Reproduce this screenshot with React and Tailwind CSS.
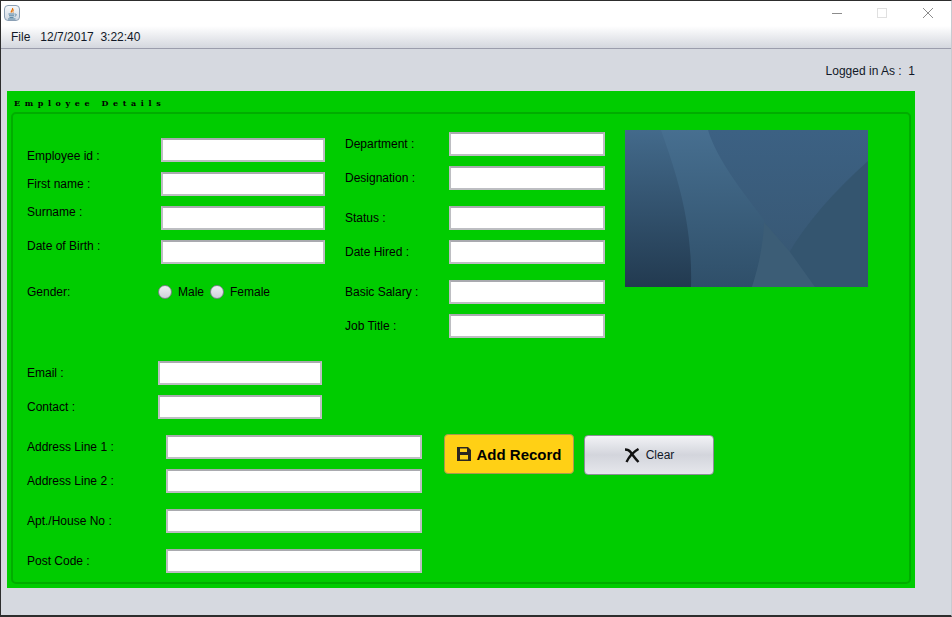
import React from 'react';

function Field({ label, labelW, inputW, shift = 'mt-0', gap = 'mb-[10px]' }) {
  return (
    <div className={`flex h-6 ${gap}`}>
      <div className={`flex items-center shrink-0 h-6 ${shift}`} style={{ width: labelW }}>{label}</div>
      <input type="text" readOnly className="h-6 bg-white border-2 border-[#bdbec2] border-t-[#a9aaaf] outline-none" style={{ width: inputW }} />
    </div>
  );
}

function Radio({ label }) {
  return (
    <div className="flex items-center">
      <div className="w-[14px] h-[14px] rounded-full border border-[#7f828c] bg-gradient-to-b from-[#eeeff3] to-[#cfd1d9]" />
      <span className="ml-[6px] mr-[6px]">{label}</span>
    </div>
  );
}

function JavaIcon() {
  return (
    <div className="w-4 h-4 rounded-sm border border-[#8ba0b5] bg-gradient-to-b from-[#f7f9fb] to-[#cfd8e2] flex items-center justify-center">
      <svg width="12" height="13" viewBox="0 0 12 13" fill="none">
        <path d="M6.5 1C7.5 3 4.5 3.6 5.3 5.6" stroke="#e76f00" strokeWidth="1.2" />
        <path d="M8 2.6C6.6 3.4 6.6 4.4 7.2 5.6" stroke="#e76f00" strokeWidth="1" />
        <path d="M2.5 7H8.5M3 8.8H8M3.5 10.6H7.5M2 12H9.5" stroke="#5382a1" strokeWidth="1" />
        <path d="M9 7C10.8 6.8 10.8 9 8.6 9.2" stroke="#5382a1" strokeWidth="0.9" />
      </svg>
    </div>
  );
}

function Wallpaper() {
  return (
    <svg width="243" height="157" viewBox="0 0 243 157" className="shrink-0 block">
      <defs>
        <linearGradient id="wpBase" x1="0" y1="0" x2="0" y2="1">
          <stop offset="0" stopColor="#3c6183" />
          <stop offset="1" stopColor="#375671" />
        </linearGradient>
        <linearGradient id="wpLeft" x1="0" y1="0" x2="0" y2="1">
          <stop offset="0" stopColor="#436a8b" />
          <stop offset="1" stopColor="#223a50" />
        </linearGradient>
        <linearGradient id="wpMid" x1="0" y1="0" x2="0" y2="1">
          <stop offset="0" stopColor="#476f90" />
          <stop offset="1" stopColor="#2f4f69" />
        </linearGradient>
      </defs>
      <rect width="243" height="157" fill="url(#wpBase)" />
      <path d="M0 0H83C92 30 118 62 139 90C139 120 134 140 127 157H0Z" fill="url(#wpMid)" />
      <path d="M0 0H36C50 40 68 90 66 157H0Z" fill="url(#wpLeft)" />
      <path d="M243 31C200 70 165 110 148 157H243Z" fill="#34556f" />
      <path d="M139 92L165 122L190 157H127C134 135 138 115 139 92Z" fill="#3c5d76" />
    </svg>
  );
}

function SaveIcon() {
  return (
    <svg width="16" height="16" viewBox="0 0 16 16">
      <path fillRule="evenodd" fill="#2b2620" d="M1 1H12L15 4V15H1ZM4 2.5V6H11V2.5ZM4 9V13.5H12V9Z" />
      <rect x="8" y="3" width="2" height="2.4" fill="#ffd015" />
    </svg>
  );
}

function ClearIcon() {
  return (
    <svg width="16" height="15" viewBox="0 0 16 15" fill="none">
      <path d="M1 1.5C3 1.5 5 1.8 6.5 4C9 7.5 12 11.5 14.5 14" stroke="#111" strokeWidth="2.4" />
      <path d="M14.5 1C10 3.5 5 9 2.5 14" stroke="#111" strokeWidth="2.4" />
    </svg>
  );
}

export default function App() {
  return (
    <div className="w-[952px] h-[617px] flex flex-col overflow-hidden border border-b-2 border-[#2d2d2d] border-r-[#c8cad0] bg-[#d6d9e0] text-[12px] leading-none text-black font-['Liberation_Sans',sans-serif]">
      {/* title bar */}
      <div className="h-[25px] bg-white flex items-center pl-[3px] pb-[1px] shrink-0">
        <JavaIcon />
        <div className="ml-auto flex items-center pr-[18px]">
          <div className="w-[10px] h-px bg-[#8c8c8c] mr-[35px]" />
          <div className="w-[10px] h-[10px] border border-[#e0e0e0] mr-[36px]" />
          <svg width="10" height="10" viewBox="0 0 10 10" stroke="#8c8c8c" strokeWidth="1"><path d="M0 0L10 10M10 0L0 10" /></svg>
        </div>
      </div>

      {/* menu bar */}
      <div className="h-[23px] shrink-0 flex items-center pl-[10px] gap-[10px] text-[#111827] bg-gradient-to-b from-white to-[#d4d7de] border-b border-[#9b9dac]">
        <span>File</span>
        <span>12/7/2017&nbsp;&nbsp;3:22:40</span>
      </div>

      {/* content */}
      <div className="flex-1 pl-[6px] pr-[36px]">
        <div className="h-[42px] flex items-center justify-end text-[#111827] pt-[2px]">
          <span className="whitespace-pre">Logged in As :  1</span>
        </div>

        <div className="w-[908px] h-[497px] bg-[#00cc00] p-1 pt-0 flex flex-col">
          <div className="h-[21px] shrink-0 flex items-center pl-[3px] pt-[3px] font-['DejaVu_Serif',serif] font-bold text-[8px] tracking-[4.6px] whitespace-pre">
            Employee Details
          </div>

          <div className="flex-1 border-2 border-[#00ad00] rounded-[5px] pl-[14px] pt-[16px]">
            {/* upper block */}
            <div className="flex">
              <div className="w-[298px] mt-2 shrink-0">
                <Field label="Employee id :" labelW={134} inputW={164} shift="mt-[6px]" />
                <Field label="First name :" labelW={134} inputW={164} />
                <Field label="Surname :" labelW={134} inputW={164} shift="-mt-[6px]" />
                <Field label="Date of Birth :" labelW={134} inputW={164} shift="-mt-[6px]" gap="mb-[21px]" />
                <div className="flex items-center h-[14px]">
                  <div className="w-[131px] shrink-0">Gender:</div>
                  <Radio label="Male" />
                  <Radio label="Female" />
                </div>
              </div>

              <div className="w-[260px] ml-5 mt-[2px] shrink-0">
                <Field label="Department :" labelW={104} inputW={156} />
                <Field label="Designation :" labelW={104} inputW={156} gap="mb-4" />
                <Field label="Status :" labelW={104} inputW={156} />
                <Field label="Date Hired :" labelW={104} inputW={156} gap="mb-4" />
                <Field label="Basic Salary :" labelW={104} inputW={156} />
                <Field label="Job Title :" labelW={104} inputW={156} gap="mb-0" />
              </div>

              <div className="ml-5">
                <Wallpaper />
              </div>
            </div>

            {/* email and contact */}
            <div className="mt-[23px]">
              <Field label="Email :" labelW={131} inputW={164} />
              <Field label="Contact :" labelW={131} inputW={164} gap="mb-0" />
            </div>

            {/* address and buttons */}
            <div className="flex items-start mt-[15px]">
              <div className="pt-px">
                <Field label="Address Line 1 :" labelW={139} inputW={256} />
                <Field label="Address Line 2 :" labelW={139} inputW={256} gap="mb-4" />
                <Field label="Apt./House No :" labelW={139} inputW={256} gap="mb-4" />
                <Field label="Post Code :" labelW={139} inputW={256} gap="mb-0" />
              </div>
              <button className="ml-[22px] w-[130px] h-10 rounded-[4px] border border-[#a89a4e] bg-[#ffd015] flex items-center justify-center gap-[4px] font-bold text-[15px] text-black">
                <SaveIcon />
                Add Record
              </button>
              <button className="ml-[10px] mt-px w-[130px] h-10 rounded-[4px] border border-[#8d8f98] bg-gradient-to-b from-[#f2f3f6] via-[#d3d5dc] to-[#e6e7ec] flex items-center justify-center gap-[6px] text-[#111827]">
                <ClearIcon />
                Clear
              </button>
            </div>
          </div>
        </div>
      </div>
    </div>
  );
}
